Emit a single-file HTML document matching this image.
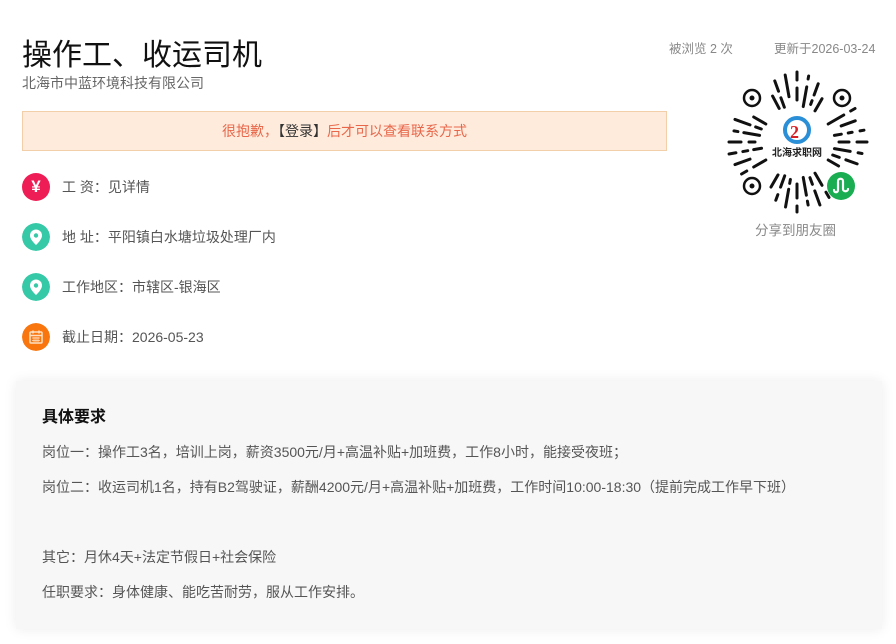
<!DOCTYPE html>
<html><head><meta charset="utf-8"><style>
*{margin:0;padding:0;box-sizing:border-box}
body{width:896px;height:644px;background:#fff;font-family:"Liberation Sans","Noto Sans CJK SC",sans-serif;position:relative;overflow:hidden;color:#555}
.abs{position:absolute;white-space:nowrap}
h1{position:absolute;left:22px;top:30px;font-size:30px;font-weight:normal;color:#111;white-space:nowrap}
.banner{position:absolute;left:22px;top:111px;width:645px;height:40px;background:#feebdc;border:1px solid #f3cfa9;text-align:center;line-height:38px;font-size:14px;color:#e8674a}
.banner b{font-weight:normal;color:#333}
.row{position:absolute;left:22px;width:600px;height:28px;font-size:14px;color:#555;line-height:28px;white-space:nowrap}
.ic{position:absolute;left:0;top:0;width:28px;height:28px;border-radius:50%}
.row span{position:absolute;left:40px;top:0;white-space:nowrap}
.card{position:absolute;left:16px;top:381px;width:866px;height:248px;background:#f7f7f7;box-shadow:0 0 12px rgba(0,0,0,.08)}
.card h3{position:absolute;left:26px;top:22px;font-size:16px;color:#111}
.card p{position:absolute;left:26px;font-size:14px;color:#555;white-space:nowrap}
</style></head><body>
<h1>操作工、收运司机</h1>
<div class="abs" style="left:22px;top:73px;font-size:14px;color:#666">北海市中蓝环境科技有限公司</div>
<div class="abs" style="left:669px;top:38px;font-size:12.5px;color:#888">被浏览 2 次</div>
<div class="abs" style="left:774px;top:38px;font-size:12.5px;color:#888">更新于2026-03-24</div>
<div class="banner">很抱歉，<b>【登录】</b>后才可以查看联系方式</div>

<div class="row" style="top:173px"><div class="ic" style="background:#ef1d55;color:#fff;font-size:17px;font-weight:bold;text-align:center;line-height:28px">¥</div><span>工 资：见详情</span></div>
<div class="row" style="top:223px"><svg class="ic" viewBox="0 0 28 28"><circle cx="14" cy="14" r="14" fill="#36c9a7"/><path d="M14 6.5a6 6 0 0 0-6 6c0 4.3 6 9.5 6 9.5s6-5.2 6-9.5a6 6 0 0 0-6-6z" fill="#fff"/><circle cx="14" cy="12.5" r="2.2" fill="#36c9a7"/></svg><span>地 址：平阳镇白水塘垃圾处理厂内</span></div>
<div class="row" style="top:273px"><svg class="ic" viewBox="0 0 28 28"><circle cx="14" cy="14" r="14" fill="#36c9a7"/><path d="M14 6.5a6 6 0 0 0-6 6c0 4.3 6 9.5 6 9.5s6-5.2 6-9.5a6 6 0 0 0-6-6z" fill="#fff"/><circle cx="14" cy="12.5" r="2.2" fill="#36c9a7"/></svg><span>工作地区：市辖区-银海区</span></div>
<div class="row" style="top:323px"><svg class="ic" viewBox="0 0 28 28"><circle cx="14" cy="14" r="14" fill="#f9760f"/><rect x="8" y="9" width="12" height="11" rx="1" fill="none" stroke="#fde0c4" stroke-width="1.5"/><line x1="8" y1="12.5" x2="20" y2="12.5" stroke="#fde0c4" stroke-width="1.5"/><path d="M11 7.5v3M17 7.5v3" stroke="#fde0c4" stroke-width="1.5"/><path d="M10 15h8M10 17.5h8M12 14v5M14 14v5M16 14v5" stroke="#fde0c4" stroke-width=".8"/></svg><span>截止日期：2026-05-23</span></div>

<svg class="abs" style="left:0;top:0" width="896" height="240">
<g stroke="#111" stroke-width="3" stroke-linecap="round">
<g transform="rotate(0 797 142)"><line x1="797" y1="72" x2="797" y2="80"/><line x1="797" y1="88" x2="797" y2="100"/></g>
<g transform="rotate(10 797 142)"><line x1="797" y1="75" x2="797" y2="78"/><line x1="797" y1="86" x2="797" y2="106"/></g>
<g transform="rotate(20 797 142)"><line x1="797" y1="80" x2="797" y2="92"/><line x1="797" y1="98" x2="797" y2="102"/></g>
<g transform="rotate(-10 797 142)"><line x1="797" y1="74" x2="797" y2="96"/></g>
<g transform="rotate(-20 797 142)"><line x1="797" y1="77" x2="797" y2="88"/><line x1="797" y1="95" x2="797" y2="105"/></g>
<g transform="rotate(-28 797 142)"><line x1="797" y1="90" x2="797" y2="104"/></g>
<g transform="rotate(30 797 142)"><line x1="797" y1="92" x2="797" y2="106"/></g>
<g transform="rotate(60 797 142)"><line x1="797" y1="75" x2="797" y2="80"/><line x1="797" y1="88" x2="797" y2="106"/></g>
<g transform="rotate(70 797 142)"><line x1="797" y1="80" x2="797" y2="95"/></g>
<g transform="rotate(80 797 142)"><line x1="797" y1="74" x2="797" y2="78"/><line x1="797" y1="86" x2="797" y2="90"/><line x1="797" y1="97" x2="797" y2="104"/></g>
<g transform="rotate(90 797 142)"><line x1="797" y1="72" x2="797" y2="82"/><line x1="797" y1="90" x2="797" y2="100"/></g>
<g transform="rotate(100 797 142)"><line x1="797" y1="76" x2="797" y2="80"/><line x1="797" y1="88" x2="797" y2="104"/></g>
<g transform="rotate(110 797 142)"><line x1="797" y1="78" x2="797" y2="90"/><line x1="797" y1="97" x2="797" y2="104"/></g>
<g transform="rotate(120 797 142)"><line x1="797" y1="94" x2="797" y2="106"/></g>
<g transform="rotate(150 797 142)"><line x1="797" y1="78" x2="797" y2="84"/><line x1="797" y1="92" x2="797" y2="106"/></g>
<g transform="rotate(160 797 142)"><line x1="797" y1="75" x2="797" y2="90"/><line x1="797" y1="97" x2="797" y2="104"/></g>
<g transform="rotate(170 797 142)"><line x1="797" y1="78" x2="797" y2="82"/><line x1="797" y1="88" x2="797" y2="106"/></g>
<g transform="rotate(180 797 142)"><line x1="797" y1="72" x2="797" y2="78"/><line x1="797" y1="86" x2="797" y2="100"/></g>
<g transform="rotate(190 797 142)"><line x1="797" y1="76" x2="797" y2="94"/><line x1="797" y1="100" x2="797" y2="104"/></g>
<g transform="rotate(200 797 142)"><line x1="797" y1="80" x2="797" y2="86"/><line x1="797" y1="94" x2="797" y2="106"/></g>
<g transform="rotate(210 797 142)"><line x1="797" y1="90" x2="797" y2="104"/></g>
<g transform="rotate(240 797 142)"><line x1="797" y1="78" x2="797" y2="84"/><line x1="797" y1="92" x2="797" y2="106"/></g>
<g transform="rotate(250 797 142)"><line x1="797" y1="76" x2="797" y2="92"/></g>
<g transform="rotate(260 797 142)"><line x1="797" y1="73" x2="797" y2="80"/><line x1="797" y1="87" x2="797" y2="92"/><line x1="797" y1="98" x2="797" y2="106"/></g>
<g transform="rotate(270 797 142)"><line x1="797" y1="74" x2="797" y2="86"/><line x1="797" y1="94" x2="797" y2="100"/></g>
<g transform="rotate(280 797 142)"><line x1="797" y1="78" x2="797" y2="82"/><line x1="797" y1="88" x2="797" y2="104"/></g>
<g transform="rotate(290 797 142)"><line x1="797" y1="76" x2="797" y2="92"/><line x1="797" y1="98" x2="797" y2="104"/></g>
<g transform="rotate(300 797 142)"><line x1="797" y1="92" x2="797" y2="106"/></g>
</g>
<g fill="none" stroke="#111" stroke-width="2.5"><circle cx="752" cy="98" r="8"/><circle cx="842" cy="98" r="8"/><circle cx="752" cy="186" r="8"/></g>
<g fill="#111"><circle cx="752" cy="98" r="2.5"/><circle cx="842" cy="98" r="2.5"/><circle cx="752" cy="186" r="2.5"/></g>
<circle cx="797" cy="130" r="12" fill="none" stroke="#2a8fd6" stroke-width="4"/>
<text x="790" y="138" font-size="18" font-weight="bold" fill="#d71f26" font-family="Liberation Serif,serif">2</text>
<text x="797" y="156" font-size="10" font-weight="bold" fill="#222" text-anchor="middle" font-family="Liberation Sans,Noto Sans CJK SC,sans-serif">北海求职网</text>
<circle cx="841" cy="186" r="14" fill="#1aad52"/>
<path d="M838 181c0-3 5-3 5 0v8c0 3 5 3 5 0M834 190c0 3 4 3 4 0v-8" stroke="#fff" stroke-width="2.2" fill="none" stroke-linecap="round"/>
</svg>
<div class="abs" style="left:755px;top:219px;font-size:13.5px;color:#888">分享到朋友圈</div>

<div class="card">
<h3>具体要求</h3>
<p style="top:61px">岗位一：操作工3名，培训上岗，薪资3500元/月+高温补贴+加班费，工作8小时，能接受夜班；</p>
<p style="top:96px">岗位二：收运司机1名，持有B2驾驶证，薪酬4200元/月+高温补贴+加班费，工作时间10:00-18:30（提前完成工作早下班）</p>
<p style="top:166px">其它：月休4天+法定节假日+社会保险</p>
<p style="top:201px">任职要求：身体健康、能吃苦耐劳，服从工作安排。</p>
</div>
</body></html>
